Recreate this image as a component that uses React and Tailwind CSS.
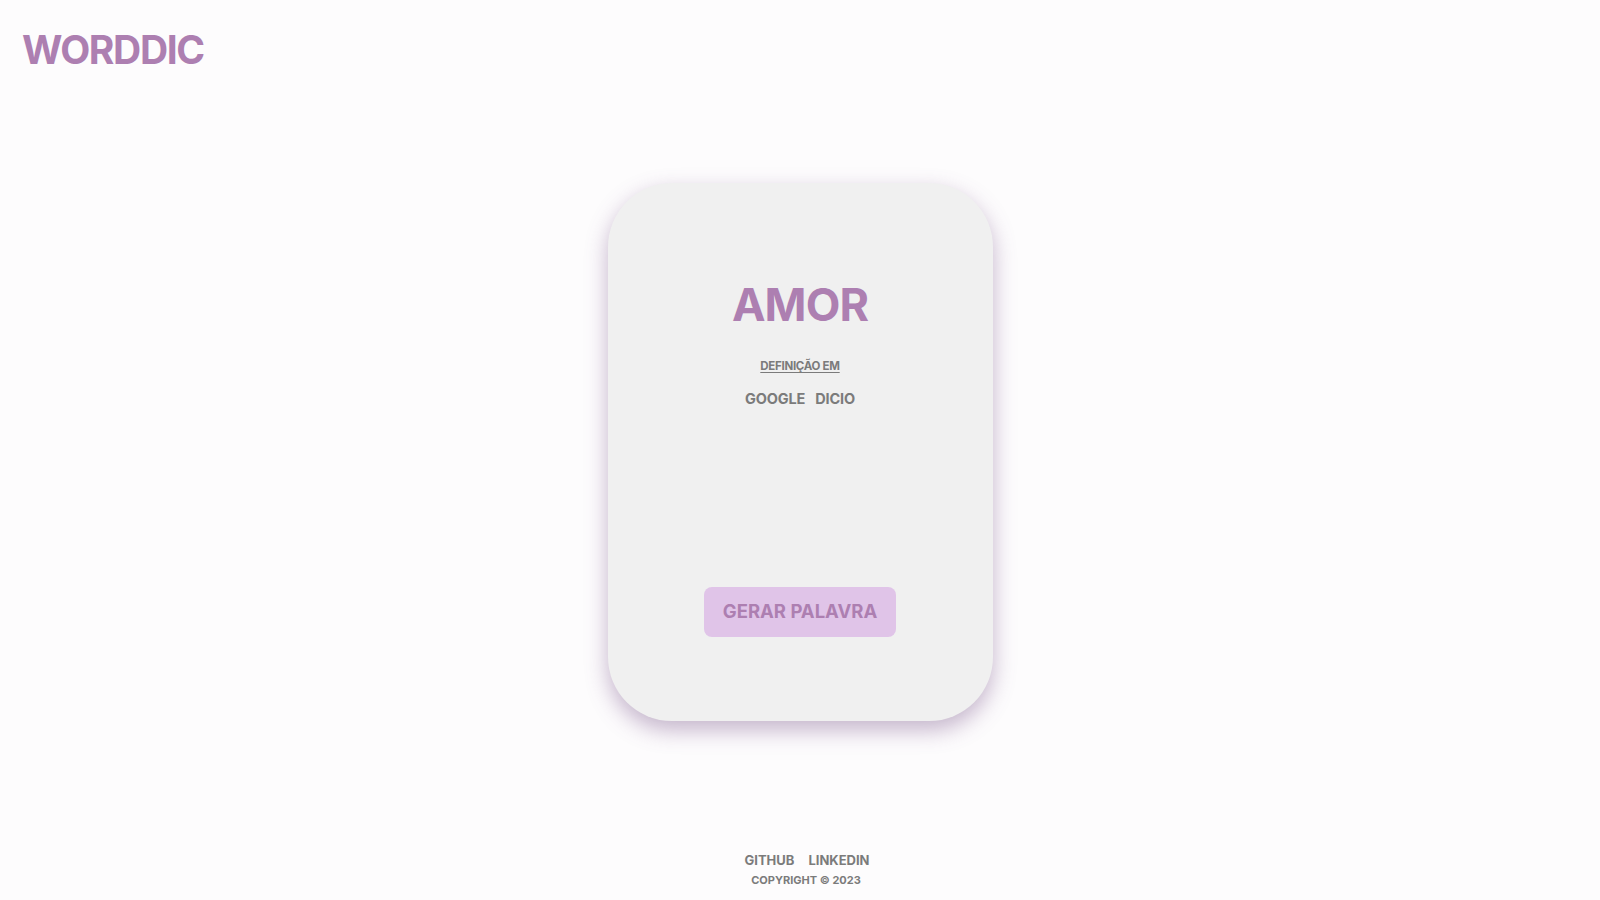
const purple = 'text-[#ad7fb1]';

const Header = () => (
  <header className="px-[22px] pt-[30px]">
    <h1 className={`text-[39px] leading-none font-bold tracking-[-0.035em] ${purple}`}>WORDDIC</h1>
  </header>
);

const WordCard = () => (
  <div className="mx-auto mt-[114px] w-[385px] h-[538px] rounded-[64px] bg-[#f0f0f0] shadow-[0_9px_22px_rgba(120,80,135,0.42)] flex flex-col items-center pt-[99px]">
    <h2 className={`text-[45px] leading-none font-bold tracking-[-0.02em] ${purple}`}>AMOR</h2>
    <a href="#" className="mt-[34px] text-[11.5px] leading-none font-bold text-[#7b7b7b] underline underline-offset-2 tracking-tight">
      DEFINIÇÃO EM
    </a>
    <div className="mt-[19px] flex gap-[10px] text-[14.5px] leading-none font-bold tracking-[-0.01em] text-[#7b7b7b]">
      <a href="#">GOOGLE</a>
      <a href="#">DICIO</a>
    </div>
    <button className={`mt-[181px] w-[192px] h-[50px] rounded-[8px] bg-[#e0c4e8] text-[18.5px] font-bold ${purple}`}>
      GERAR PALAVRA
    </button>
  </div>
);

const Footer = () => (
  <footer className="mt-auto pb-[14px] flex flex-col items-center text-[#7b7b7b] font-bold">
    <div className="flex gap-[14px] text-[13px] leading-none pl-[14px]">
      <a href="#">GITHUB</a>
      <a href="#">LINKEDIN</a>
    </div>
    <p className="mt-[8px] text-[11px] leading-none pl-[12px]">COPYRIGHT © 2023</p>
  </footer>
);

export default function App() {
  return (
    <div className="h-screen w-full bg-[#fdfcfd] flex flex-col font-['Inter',sans-serif] overflow-hidden">
      <Header />
      <WordCard />
      <Footer />
    </div>
  );
}
